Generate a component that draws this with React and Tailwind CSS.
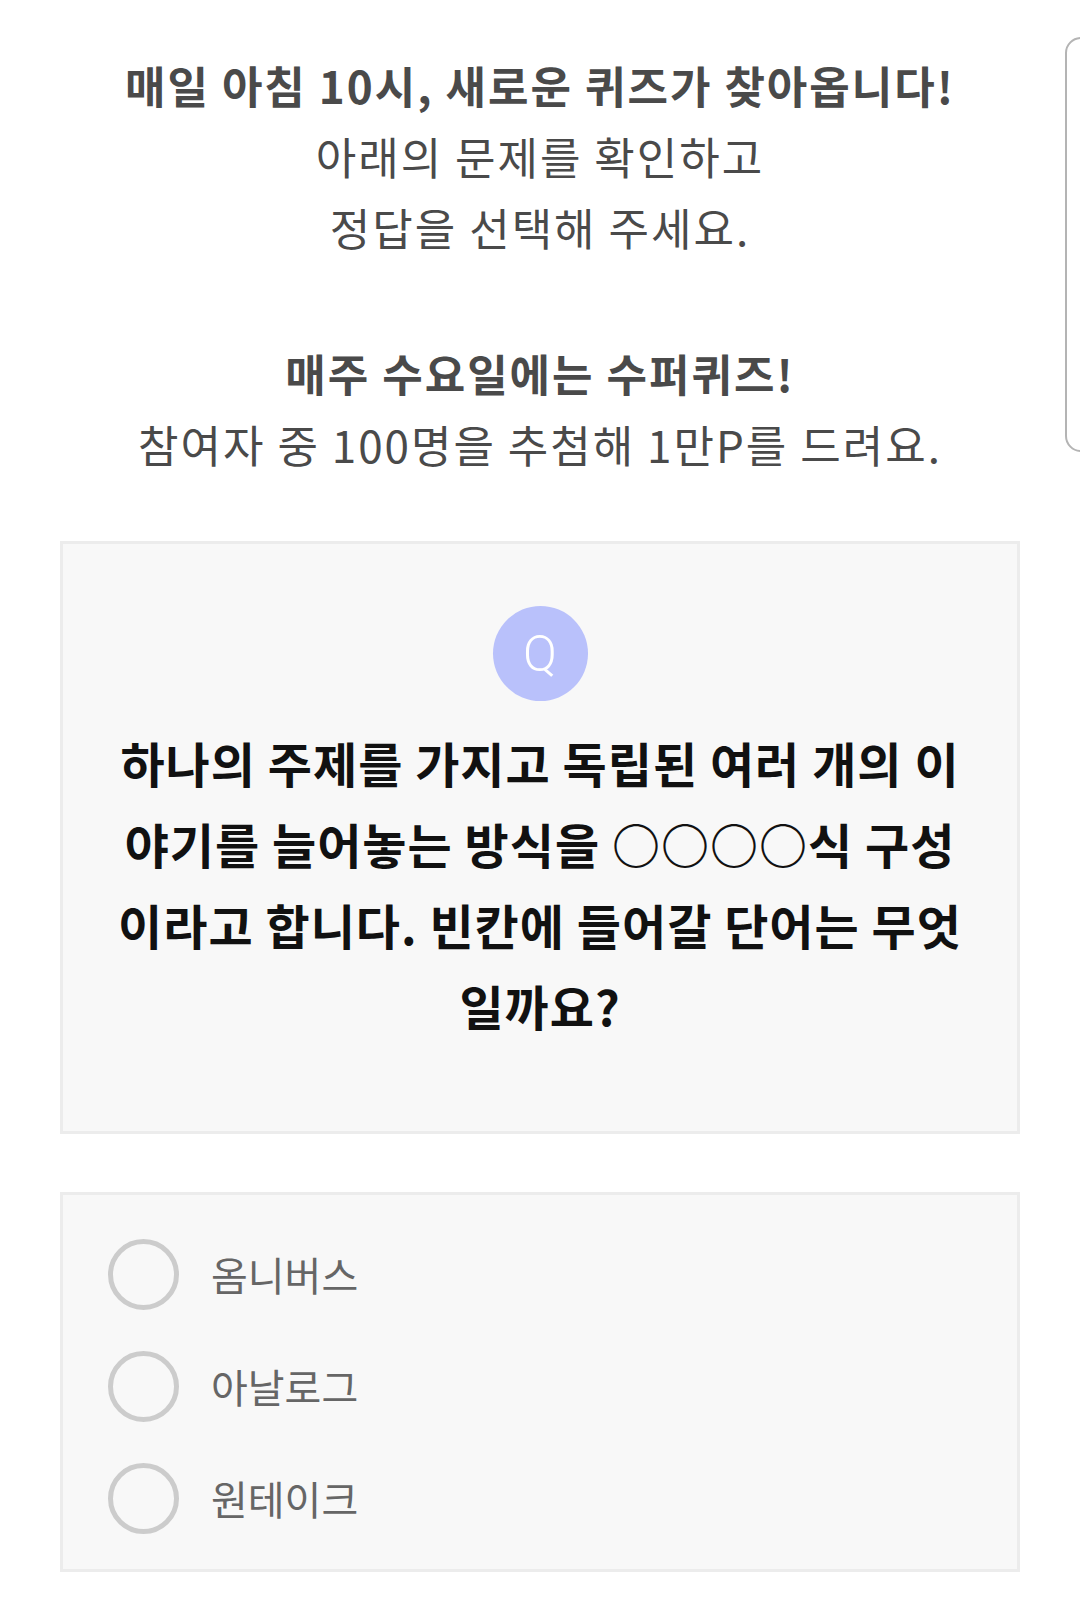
import React from 'react';

const font = { fontFamily: '"Noto Sans CJK KR", "Noto Sans", sans-serif' };

const options = ['옴니버스', '아날로그', '원테이크'];

const Radio = ({ label }) => (
  <label className="flex items-center gap-[32px] h-[112px]">
    <span className="w-[71px] h-[71px] rounded-full border-[5px] border-[#cccccc] shrink-0" />
    <span className="text-[40px] text-[#666666]">{label}</span>
  </label>
);

export default function App() {
  return (
    <div className="relative w-[1080px] min-h-[1610px] bg-white overflow-hidden" style={font}>
      {/* edge panel handle */}
      <div className="absolute left-[1065px] top-[37px] w-[40px] h-[415px] border-2 border-[#b4b4b4] rounded-l-[16px]" />

      <div className="pt-[50px] text-center text-[44px] tracking-[2px] leading-[71px] text-[#4a4a4a]">
        <p className="font-bold">매일 아침 10시, 새로운 퀴즈가 찾아옵니다!</p>
        <p>아래의 문제를 확인하고</p>
        <p>정답을 선택해 주세요.</p>
        <p className="font-bold mt-[75px]">매주 수요일에는 수퍼퀴즈!</p>
        <p>참여자 중 100명을 추첨해 1만P를 드려요.</p>
      </div>

      <div className="mx-[60px] mt-[61px] bg-[#f8f8f8] border-[3px] border-[#ececec] pt-[62px] pb-[85px] px-[40px] flex flex-col items-center">
        <div className="w-[95px] h-[95px] rounded-full bg-[#b9c1fb] flex items-center justify-center">
          <span className="text-white text-[50px] font-light leading-none" style={{ fontFamily: 'Roboto, sans-serif' }}>Q</span>
        </div>
        <p className="mt-[21px] text-center text-[48px] tracking-[1px] leading-[81px] font-bold text-[#111111]">
          하나의 주제를 가지고 독립된 여러 개의 이<br />
          야기를 늘어놓는 방식을 ○○○○식 구성<br />
          이라고 합니다. 빈칸에 들어갈 단어는 무엇<br />
          일까요?
        </p>
      </div>

      <div className="mx-[60px] mt-[58px] bg-[#f8f8f8] border-[3px] border-[#ececec] pl-[45px] pt-[23px] pb-[15px]">
        {options.map((o) => (
          <Radio key={o} label={o} />
        ))}
      </div>
    </div>
  );
}
